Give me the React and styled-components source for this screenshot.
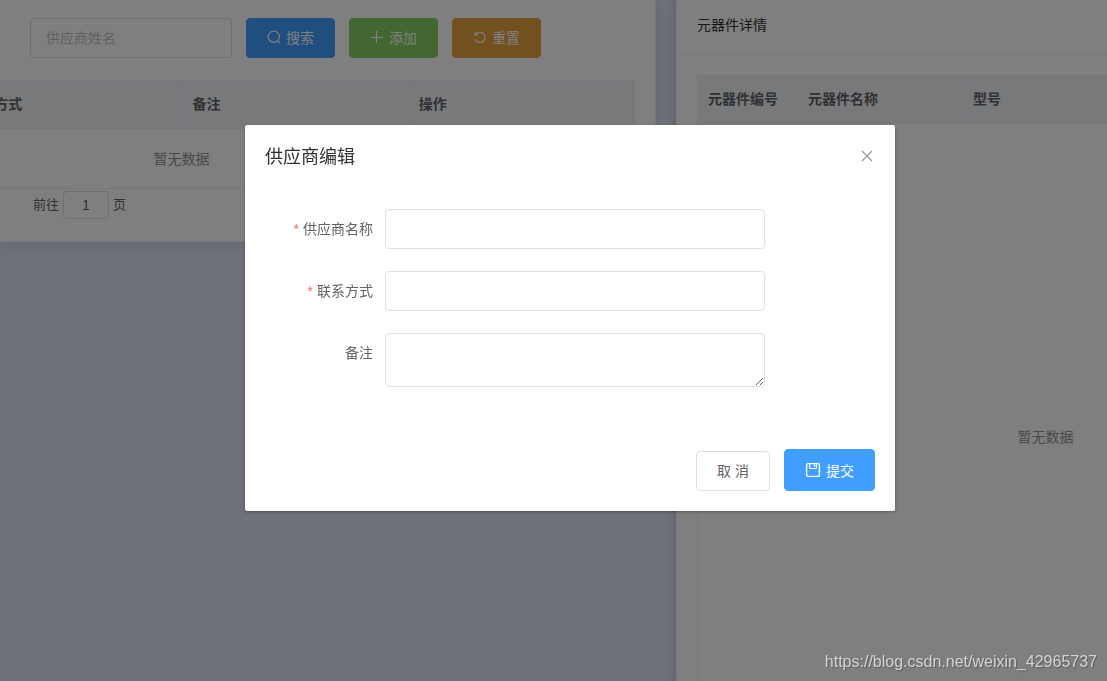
import React, { useState } from 'react';
import styled, { createGlobalStyle } from 'styled-components';

const GlobalStyle = createGlobalStyle`
    * {
        box-sizing: border-box;
    }

    body {
        margin: 0;
        overflow: hidden;
        background-color: #dce2f1;
        color: #606266;
        font-family: "Liberation Sans", "Noto Sans CJK SC", sans-serif;
        font-size: 14px;
    }

    button, input, textarea {
        font-family: inherit;
    }
`;

const Page = styled.div`
    display: flex;
    align-items: flex-start;
    height: 100vh;
    overflow: hidden;
`;

const SupplierCard = styled.section`
    flex: 1;
    min-width: 0;
    margin-right: 20px;
    padding: 18px 20px 22px 0;
    overflow: hidden;
    background-color: #fff;
    border: 1px solid #ebeef5;
    border-width: 0 1px 1px 0;
    box-shadow: 0 2px 12px rgba(0, 0, 0, 0.1);
`;

const Toolbar = styled.div`
    display: flex;
    gap: 14px;
    padding-left: 30px;
    margin-bottom: 22px;
`;

const Input = styled.input`
    width: ${({ $width }) => $width || '100%'};
    height: 40px;
    padding: 0 15px;
    border: 1px solid #dcdfe6;
    border-radius: 4px;
    background-color: #fff;
    color: #606266;
    font-size: 14px;
    outline: none;

    &::placeholder {
        color: #c0c4cc;
    }
`;

const Button = styled.button`
    display: inline-flex;
    align-items: center;
    justify-content: center;
    gap: 5px;
    height: ${({ $tall }) => ($tall ? '42px' : '40px')};
    padding: ${({ $tall }) => ($tall ? '0 20px' : '0 20px 2px')};
    border: 1px solid ${({ $color }) => $color || '#dcdfe6'};
    border-radius: 4px;
    background-color: ${({ $color }) => $color || '#fff'};
    color: ${({ $color }) => ($color ? '#fff' : '#606266')};
    font-size: 14px;
    white-space: nowrap;
    cursor: pointer;
`;

const Icon = styled.svg`
    flex: none;
    width: ${({ $size }) => $size || 14}px;
    height: ${({ $size }) => $size || 14}px;
    fill: none;
    stroke: currentColor;
    stroke-width: ${({ $stroke }) => $stroke || 1.2};
`;

// the table is wider than its card, the left columns are scrolled away
const TableScroll = styled.div`
    display: flex;
    justify-content: ${({ $end }) => ($end ? 'flex-end' : 'flex-start')};
    overflow: hidden;
`;

const Table = styled.table`
    flex: none;
    width: ${({ $width }) => $width};
    table-layout: fixed;
    border-collapse: separate;
    border-spacing: 0;
    border-left: 1px solid #ebeef5;
    border-top: 1px solid #ebeef5;
`;

const Th = styled.th`
    width: ${({ $width }) => $width || 'auto'};
    height: 48px;
    padding: 0 10px 4px;
    border-right: 1px solid #ebeef5;
    border-bottom: 1px solid #ebeef5;
    background-color: #f0f3f7;
    color: #606266;
    font-size: 14px;
    font-weight: 700;
    text-align: left;
`;

const EmptyCell = styled.td`
    height: ${({ $height }) => $height};
    padding: 0 2px 2px 0;
    border-bottom: 1px solid #ebeef5;
    color: #909399;
    text-align: center;
`;

const Pagination = styled.div`
    display: flex;
    align-items: center;
    gap: 4px;
    padding: 2px 0 0 33px;
    font-size: 13px;
    line-height: 28px;
`;

const PageInput = styled(Input)`
    height: 28px;
    padding: 0 3px;
    text-align: center;
`;

const DetailPanel = styled.aside`
    flex: none;
    width: 431px;
    height: 100vh;
    overflow: hidden;
    border-left: 1px solid #ebeef5;
    background-color: #fff;
    box-shadow: 0 2px 12px rgba(0, 0, 0, 0.2);
`;

const DetailTitle = styled.h2`
    margin: 0;
    padding: 15px 20px 19px;
    border-bottom: 1px solid #ebeef5;
    color: #303133;
    font-size: 14px;
    font-weight: 400;
    line-height: 20px;
`;

const DetailBody = styled.div`
    padding: 20px 0 0 20px;
`;

const Overlay = styled.div`
    position: fixed;
    inset: 0;
    padding: 125px 0 0 33px;
    background-color: rgba(0, 0, 0, 0.5);
`;

const Dialog = styled.form`
    width: 650px;
    margin: 0 auto;
    border-radius: 2px;
    background-color: #fff;
    box-shadow: 0 1px 3px rgba(0, 0, 0, 0.3);
`;

const DialogHeader = styled.header`
    display: flex;
    align-items: flex-start;
    justify-content: space-between;
    padding: 20px 20px 10px;
`;

const DialogTitle = styled.h1`
    margin: 0;
    color: #303133;
    font-size: 18px;
    font-weight: 400;
    line-height: 24px;
`;

const CloseButton = styled.button`
    display: flex;
    padding: 3px 0 0;
    border: none;
    background: transparent;
    color: #909399;
    cursor: pointer;
`;

const DialogBody = styled.div`
    padding: 30px 20px;
`;

const FormItem = styled.div`
    display: flex;
    align-items: flex-start;
    margin-bottom: 22px;
`;

const Label = styled.label`
    flex: none;
    width: 120px;
    padding-right: 12px;
    color: #606266;
    line-height: 40px;
    text-align: right;
`;

const Required = styled.span`
    margin-right: 4px;
    color: #f56c6c;
`;

const Textarea = styled.textarea`
    display: block;
    width: 380px;
    height: 54px;
    padding: 5px 15px;
    border: 1px solid #dcdfe6;
    border-radius: 4px;
    background-color: #fff;
    color: #606266;
    font-size: 14px;
    resize: vertical;
    outline: none;
`;

const DialogFooter = styled.footer`
    display: flex;
    align-items: flex-end;
    justify-content: flex-end;
    gap: 14px;
    padding: 10px 20px 20px;
`;

const Watermark = styled.a`
    position: fixed;
    right: 10px;
    bottom: 10px;
    color: #d4d4d4;
    font-size: 16px;
    line-height: 18px;
    text-decoration: none;
    text-shadow: 1px 1px 1px rgba(0, 0, 0, 0.3);
`;

const SearchIcon = () => (
    <Icon viewBox="0 0 14 14">
        <circle cx="6.8" cy="6.8" r="5.6" />
        <path d="M10.6 10.8l2.2 2.2" />
    </Icon>
);

const PlusIcon = () => (
    <Icon viewBox="0 0 14 14">
        <path d="M6.5 1v12M0.5 7.5h12" />
    </Icon>
);

const RefreshIcon = () => (
    <Icon viewBox="0 0 14 14">
        <path d="M2.4 4.9A5.1 5.1 0 1 1 2.2 9.4M2.1 2v3h3" />
    </Icon>
);

const CloseIcon = () => (
    <Icon viewBox="0 0 16 16" $size={16} $stroke={1.1}>
        <path d="M3 3l10 10M13 3L3 13" />
    </Icon>
);

const SaveIcon = () => (
    <Icon viewBox="0 0 16 16" $size={16}>
        <rect x="1.6" y="1.6" width="12.8" height="12.8" rx="1.5" strokeWidth="1.4" />
        <path d="M4.6 1.6v3.9a1 1 0 0 0 1 1h4.8a1 1 0 0 0 1-1V1.6M9.4 2.6v2" />
    </Icon>
);

const App = () => {
    const [keyword, setKeyword] = useState('');
    const [page, setPage] = useState('1');
    const [form, setForm] = useState({ name: '', contact: '', remark: '' });

    const handleChange = (e) => {
        setForm({ ...form, [e.target.name]: e.target.value });
    };

    return (
        <>
            <GlobalStyle />
            <Page>
                <SupplierCard>
                    <Toolbar>
                        <Input
                            $width="202px"
                            placeholder="供应商姓名"
                            aria-label="供应商姓名"
                            value={keyword}
                            onChange={(e) => setKeyword(e.target.value)}
                        />
                        <Button type="button" $color="#409eff"><SearchIcon />搜索</Button>
                        <Button type="button" $color="#85ce61"><PlusIcon />添加</Button>
                        <Button type="button" $color="#e6a23c"><RefreshIcon />重置</Button>
                    </Toolbar>
                    <TableScroll $end>
                        <Table $width="906px">
                            <thead>
                                <tr>
                                    <Th />
                                    <Th>联系方式</Th>
                                    <Th>备注</Th>
                                    <Th>操作</Th>
                                </tr>
                            </thead>
                            <tbody>
                                <tr>
                                    <EmptyCell colSpan={4} $height="60px">暂无数据</EmptyCell>
                                </tr>
                            </tbody>
                        </Table>
                    </TableScroll>
                    <Pagination>
                        <label htmlFor="page">前往</label>
                        <PageInput
                            $width="46px"
                            id="page"
                            value={page}
                            onChange={(e) => setPage(e.target.value)}
                        />
                        <span>页</span>
                    </Pagination>
                </SupplierCard>
                <DetailPanel>
                    <DetailTitle>元器件详情</DetailTitle>
                    <DetailBody>
                        <TableScroll>
                            <Table $width="698px">
                                <thead>
                                    <tr>
                                        <Th $width="100px">元器件编号</Th>
                                        <Th $width="165px">元器件名称</Th>
                                        <Th>型号</Th>
                                    </tr>
                                </thead>
                                <tbody>
                                    <tr>
                                        <EmptyCell colSpan={3} $height="626px">暂无数据</EmptyCell>
                                    </tr>
                                </tbody>
                            </Table>
                        </TableScroll>
                    </DetailBody>
                </DetailPanel>
            </Page>
            <Overlay>
                <Dialog role="dialog" aria-labelledby="dialog-title" onSubmit={(e) => e.preventDefault()}>
                    <DialogHeader>
                        <DialogTitle id="dialog-title">供应商编辑</DialogTitle>
                        <CloseButton type="button" aria-label="关闭"><CloseIcon /></CloseButton>
                    </DialogHeader>
                    <DialogBody>
                        <FormItem>
                            <Label htmlFor="name"><Required>*</Required>供应商名称</Label>
                            <Input $width="380px" id="name" name="name" value={form.name} onChange={handleChange} />
                        </FormItem>
                        <FormItem>
                            <Label htmlFor="contact"><Required>*</Required>联系方式</Label>
                            <Input $width="380px" id="contact" name="contact" value={form.contact} onChange={handleChange} />
                        </FormItem>
                        <FormItem>
                            <Label htmlFor="remark">备注</Label>
                            <Textarea id="remark" name="remark" value={form.remark} onChange={handleChange} />
                        </FormItem>
                    </DialogBody>
                    <DialogFooter>
                        <Button type="button">取 消</Button>
                        <Button type="submit" $color="#409eff" $tall><SaveIcon />提交</Button>
                    </DialogFooter>
                </Dialog>
            </Overlay>
            <Watermark href="https://blog.csdn.net/weixin_42965737">
                https://blog.csdn.net/weixin_42965737
            </Watermark>
        </>
    );
};

export default App;
